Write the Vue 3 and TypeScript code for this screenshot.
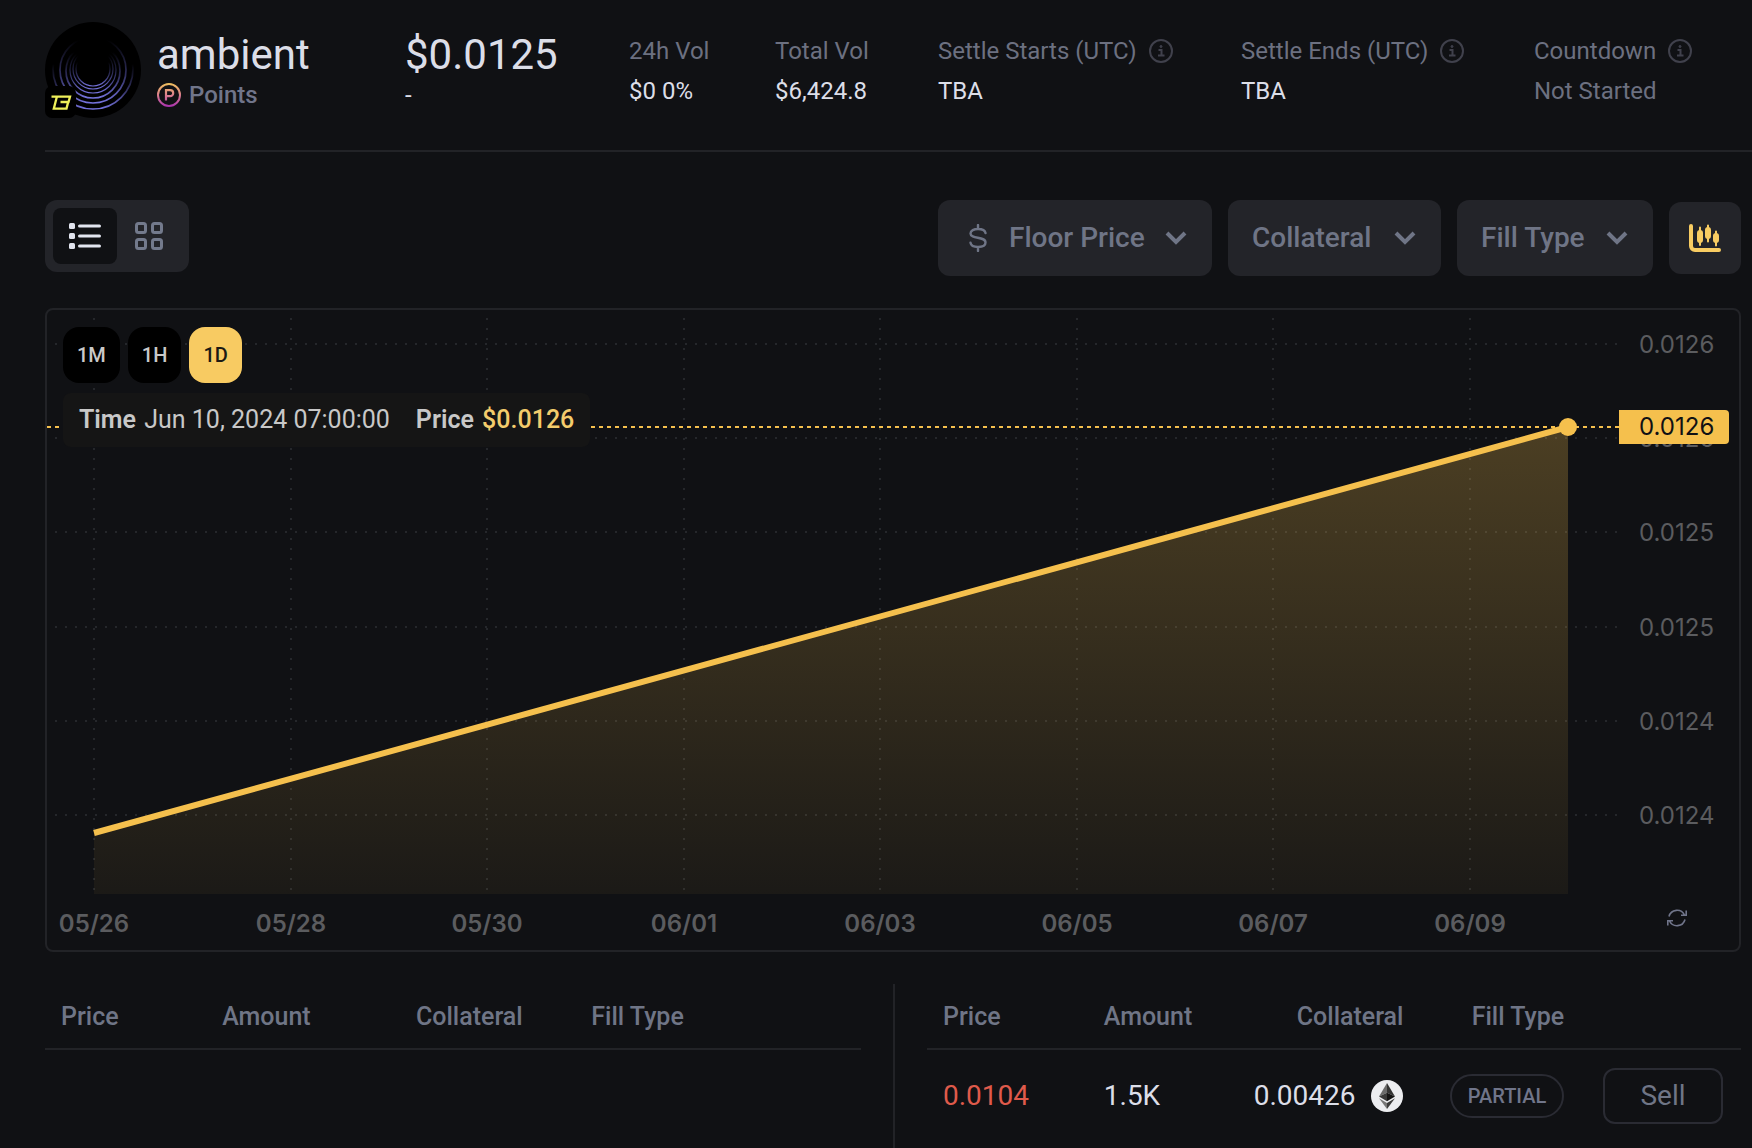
<script setup lang="ts">
import { computed, onBeforeUnmount, onMounted, ref } from 'vue'

interface Stat {
  label: string
  value: string
  info: boolean
  muted?: boolean
}

const stats: Stat[] = [
  { label: '24h Vol', value: '$0 0%', info: false },
  { label: 'Total Vol', value: '$6,424.8', info: false },
  { label: 'Settle Starts (UTC)', value: 'TBA', info: true },
  { label: 'Settle Ends (UTC)', value: 'TBA', info: true },
  { label: 'Countdown', value: 'Not Started', info: true, muted: true },
]

// Concentric arcs of the token logo: radius, centre and the height at which each fades out
const rings = [
  { r: 17, cy: 47, fade: 40 },
  { r: 20, cy: 47, fade: 34 },
  { r: 23, cy: 48, fade: 32 },
  { r: 27, cy: 49, fade: 30 },
  { r: 33, cy: 48, fade: 18 },
  { r: 40, cy: 47, fade: 42 },
]

const view = ref<'list' | 'grid'>('list')
const showChart = ref(true)
const frames = ['1M', '1H', '1D']
const frame = ref('1D')
const headings = ['Price', 'Amount', 'Collateral', 'Fill Type']

// Chart geometry
const HEIGHT = 640
const LEFT = 47
const RIGHT = 171
const AXIS = 120
const TOP = 8
const BASE = 584
const chart = ref<HTMLElement | null>(null)
const width = ref(1692)
const dates = ['05/26', '05/28', '05/30', '06/01', '06/03', '06/05', '06/07', '06/09']
const prices = ['0.0126', '0.0126', '0.0125', '0.0125', '0.0124', '0.0124']

const endX = computed(() => width.value - RIGHT)
const axisX = computed(() => width.value - AXIS)
const columns = computed(() =>
  dates.map((label, i) => ({ label, x: Math.round(LEFT + ((endX.value - LEFT) * i * 2) / 15) })),
)
const rows = prices.map((label, i) => ({ label, y: Math.round(34 + (i * 471) / 5) }))
const startY = 523
const lastY = 117

let observer: ResizeObserver | undefined
onMounted(() => {
  const el = chart.value
  if (!el) return
  width.value = el.clientWidth
  observer = new ResizeObserver(() => {
    width.value = el.clientWidth
  })
  observer.observe(el)
})
onBeforeUnmount(() => observer?.disconnect())
</script>

<template>
  <div class="page">
    <header class="header">
      <div class="token">
        <svg class="logo" viewBox="0 0 96 96" aria-hidden="true">
          <defs>
            <linearGradient
              v-for="ring in rings"
              :id="'ring' + ring.r"
              :key="ring.r"
              gradientUnits="userSpaceOnUse"
              x1="0"
              :y1="ring.fade"
              x2="0"
              :y2="ring.cy + ring.r"
            >
              <stop offset="0" stop-color="#6a68cf" stop-opacity="0" />
              <stop offset="0.6" stop-color="#6a68cf" stop-opacity="0.5" />
              <stop offset="1" stop-color="#7573dd" />
            </linearGradient>
          </defs>
          <circle cx="48" cy="48" r="48" fill="#000" />
          <circle
            v-for="ring in rings"
            :key="ring.r"
            cx="48"
            :cy="ring.cy"
            :r="ring.r"
            fill="none"
            :stroke="`url(#ring${ring.r})`"
            :stroke-width="ring.r > 24 ? 1.7 : 1.2"
          />
          <rect x="0" y="64" width="31" height="32" rx="7" fill="#000" />
          <path
            d="M6.500 74.700H25L23.500 80H15.500M23 80.600L21.500 86.600H8.800L11.800 75"
            fill="none"
            stroke="#eef05a"
            stroke-width="2.300"
          />
        </svg>
        <div>
          <h1 class="title">ambient</h1>
          <div class="kind">
            <svg width="24" height="24" viewBox="0 0 24 24" fill="none" stroke="url(#pointsStroke)" aria-hidden="true">
              <defs>
                <linearGradient id="pointsStroke" gradientUnits="userSpaceOnUse" x1="12" y1="0" x2="12" y2="24">
                  <stop offset="0" stop-color="#efc25c" />
                  <stop offset="0.5" stop-color="#db7f8d" />
                  <stop offset="1" stop-color="#a72fae" />
                </linearGradient>
              </defs>
              <circle cx="12" cy="12" r="11" stroke-width="2" />
              <path d="M9 17.500V7.200h4.200a2.900 2.900 0 0 1 0 6H9" stroke-width="2.200" />
            </svg>
            Points
          </div>
        </div>
      </div>
      <div class="quote">
        <div class="title">$0.0125</div>
        <div class="change">-</div>
      </div>
      <dl v-for="stat in stats" :key="stat.label" class="stat">
        <dt>
          {{ stat.label }}
          <svg v-if="stat.info" width="24" height="24" viewBox="0 0 24 24" fill="none" stroke="currentColor" stroke-width="2" aria-hidden="true">
            <circle cx="12" cy="12" r="11" />
            <path d="M9.500 11H12.500V16.500M9 16.500H15.500" />
            <circle cx="12" cy="7.500" r="1" fill="currentColor" stroke-width="1" />
          </svg>
        </dt>
        <dd :class="{ muted: stat.muted }">{{ stat.value }}</dd>
      </dl>
    </header>

    <main class="main">
      <div class="toolbar">
        <div class="views">
          <button type="button" aria-label="List view" :class="{ on: view === 'list' }" @click="view = 'list'">
            <svg width="32" height="28" viewBox="0 0 32 28" fill="currentColor" aria-hidden="true">
              <rect x="0" y="1" width="6" height="6" rx="1.500" />
              <rect x="0" y="11" width="6" height="6" rx="1.500" />
              <rect x="0" y="21" width="6" height="6" rx="1.500" />
              <rect x="9" y="2.500" width="23" height="3" rx="1.500" />
              <rect x="9" y="12.500" width="23" height="3" rx="1.500" />
              <rect x="9" y="22.500" width="23" height="3" rx="1.500" />
            </svg>
          </button>
          <button type="button" aria-label="Grid view" :class="{ on: view === 'grid' }" @click="view = 'grid'">
            <svg width="28" height="28" viewBox="0 0 28 28" fill="none" stroke="currentColor" stroke-width="3" aria-hidden="true">
              <rect x="1.500" y="1.500" width="9" height="9" rx="2" />
              <rect x="17.500" y="1.500" width="9" height="9" rx="2" />
              <rect x="1.500" y="17.500" width="9" height="9" rx="2" />
              <rect x="17.500" y="17.500" width="9" height="9" rx="2" />
            </svg>
          </button>
        </div>

        <div class="filters">
          <label class="filter sort">
            <svg class="dollar" width="18" height="28" viewBox="0 0 18 28" fill="none" stroke="currentColor" stroke-width="2.400" stroke-linecap="round" aria-hidden="true">
              <path d="M9 1v4M9 23v4M16.500 9C16 6.300 13 5 9 5S1.500 6.500 1.500 9.500C1.500 15.500 16.500 12 16.500 18.500C16.500 21.500 13 23 9 23S2 21.700 1.500 18.800" />
            </svg>
            <select aria-label="Sort by">
              <option>Floor Price</option>
            </select>
            <svg class="chevron" width="22" height="14" viewBox="0 0 22 14" aria-hidden="true"><path d="M2 2l9 9 9-9" /></svg>
          </label>
          <label class="filter collateral">
            <select aria-label="Collateral">
              <option>Collateral</option>
            </select>
            <svg class="chevron" width="22" height="14" viewBox="0 0 22 14" aria-hidden="true"><path d="M2 2l9 9 9-9" /></svg>
          </label>
          <label class="filter fill">
            <select aria-label="Fill Type">
              <option>Fill Type</option>
            </select>
            <svg class="chevron" width="22" height="14" viewBox="0 0 22 14" aria-hidden="true"><path d="M2 2l9 9 9-9" /></svg>
          </label>
          <button class="chart-toggle" type="button" aria-label="Toggle chart" @click="showChart = !showChart">
            <svg width="32" height="28" viewBox="0 0 32 28" fill="none" stroke="currentColor" stroke-linecap="round" aria-hidden="true">
              <path d="M2 2v20a4 4 0 0 0 4 4h24" stroke-width="4" />
              <path d="M11 3.500v17.500M19 1.500v16M27 7.500v14" stroke-width="2" />
              <path d="M11 9v7M19 6v6M27 12v4" stroke-width="6" />
            </svg>
          </button>
        </div>
      </div>

      <section v-if="showChart" ref="chart" class="chart">
        <svg class="plot" :width="width" :height="HEIGHT" role="img" aria-label="Price history">
          <defs>
            <linearGradient id="area" x1="0" y1="0" x2="0" y2="1">
              <stop offset="0" stop-color="#f5c04d" stop-opacity="0.26" />
              <stop offset="1" stop-color="#f5c04d" stop-opacity="0.05" />
            </linearGradient>
          </defs>
          <g class="grid">
            <line v-for="c in columns" :key="c.label" :x1="c.x" :x2="c.x" :y1="TOP" :y2="BASE" />
            <line v-for="r in rows" :key="r.y" x1="8" :x2="axisX" :y1="r.y" :y2="r.y" />
          </g>
          <g class="prices">
            <text v-for="r in rows" :key="r.y" :x="axisX + 20" :y="r.y + 9">{{ r.label }}</text>
          </g>
          <g class="dates">
            <text v-for="c in columns" :key="c.label" :x="c.x" y="622">{{ c.label }}</text>
          </g>
          <polygon :points="`${LEFT},${startY} ${endX},${lastY} ${endX},${BASE} ${LEFT},${BASE}`" fill="url(#area)" />
          <line class="current" x1="0" :x2="axisX" :y1="lastY" :y2="lastY" />
          <line class="series" :x1="LEFT" :y1="startY" :x2="endX" :y2="lastY" />
          <circle class="last" :cx="endX" :cy="lastY" r="9" />
          <path class="tag" :d="`M${axisX} 100h106a4 4 0 0 1 4 4v26a4 4 0 0 1 -4 4h-106z`" />
          <text class="tag-text" :x="axisX + 20" :y="lastY + 8">0.0126</text>
        </svg>
        <div class="overlay">
          <div class="frames">
            <button v-for="f in frames" :key="f" type="button" :class="{ on: frame === f }" @click="frame = f">{{ f }}</button>
          </div>
          <div class="readout">
            <span><b>Time</b> Jun 10, 2024 07:00:00</span>
            <span><b>Price</b> <strong>$0.0126</strong></span>
          </div>
        </div>
        <button class="refresh" type="button" aria-label="Reset chart">
          <svg width="20" height="20" viewBox="0 0 20 20" fill="none" stroke="currentColor" stroke-width="1.600" aria-hidden="true">
            <path d="M2 8.500A8.300 8.300 0 0 1 17.500 7M19.200 2.500V7.300H14M18 11.500A8.300 8.300 0 0 1 2.500 13M.8 17.500V12.700H6" />
          </svg>
        </button>
      </section>

      <div class="books">
        <section class="book">
          <table>
            <thead>
              <tr><th v-for="h in headings" :key="h" scope="col">{{ h }}</th><td></td></tr>
            </thead>
          </table>
        </section>
        <section class="book">
          <table>
            <thead>
              <tr><th v-for="h in headings" :key="h" scope="col">{{ h }}</th><td></td></tr>
            </thead>
            <tbody>
              <tr>
                <td class="ask">0.0104</td>
                <td>1.5K</td>
                <td>
                  <div class="amount">
                    0.00426
                    <svg width="32" height="32" viewBox="0 0 32 32" aria-hidden="true">
                      <circle cx="16" cy="16" r="16" fill="#ecedf0" />
                      <path d="M16 3L8 16.500l8-3.700z" fill="#6b6b6b" />
                      <path d="M16 3l8 13.500-8-3.700z" fill="#343434" />
                      <path d="M8 16.500l8-3.700v8.500z" fill="#393939" />
                      <path d="M24 16.500l-8-3.700v8.500z" fill="#141414" />
                      <path d="M8 18.200l8 4.900V29z" fill="#777" />
                      <path d="M24 18.200l-8 4.900V29z" fill="#3c3c3b" />
                    </svg>
                  </div>
                </td>
                <td><span class="pill">PARTIAL</span></td>
                <td><button class="sell" type="button">Sell</button></td>
              </tr>
            </tbody>
          </table>
        </section>
      </div>
    </main>
  </div>
</template>

<style>
body {
  margin: 0;
  background: #101114;
}
</style>

<style scoped>
.page {
  box-sizing: border-box;
  min-height: 100vh;
  display: flex;
  flex-direction: column;
  padding-left: 45px;
  background: #101114;
  color: #dcdee8;
  font: 400 24px/32px Roboto, "Liberation Sans", sans-serif;
}
button,
select {
  margin: 0;
  padding: 0;
  border: 0;
  font: inherit;
  cursor: pointer;
}
svg {
  display: block;
  flex: none;
}
.header {
  display: grid;
  grid-template-columns: 296px 160px 82px 99px 239px 229px 1fr;
  column-gap: 64px;
  align-items: center;
  padding: 22px 0 32px;
  border-bottom: 2px solid #222327;
}
.token {
  display: flex;
  align-items: center;
  gap: 16px;
}
.logo {
  width: 96px;
  height: 96px;
}
.title {
  margin: 0;
  padding-top: 2px;
  font-size: 42px;
  line-height: 48px;
  font-weight: 400;
}
.kind {
  display: flex;
  align-items: center;
  gap: 8px;
  color: #70758a;
  font-weight: 500;
}
.stat {
  display: grid;
  gap: 8px;
  margin: 0;
  padding-top: 2px;
  white-space: nowrap;
}
.stat dt {
  display: flex;
  align-items: center;
  gap: 12px;
  color: #6c7080;
}
.stat dt svg {
  color: #40414c;
}
.stat dd {
  margin: 0;
}
.stat .muted {
  color: #6c7080;
}
.main {
  flex: 1;
  display: flex;
  flex-direction: column;
  gap: 32px;
  padding: 48px 11px 0 0;
}
.toolbar {
  display: flex;
  justify-content: space-between;
  align-items: flex-start;
}
.views {
  display: flex;
  padding: 8px;
  border-radius: 12px;
  background: #232429;
}
.views button {
  display: grid;
  place-items: center;
  width: 64px;
  height: 56px;
  border-radius: 8px;
  background: none;
  color: #737a8c;
}
.views .on {
  background: #101114;
  color: #e2e5ef;
}
.filters {
  display: flex;
  align-items: center;
  gap: 16px;
}
.filter {
  box-sizing: border-box;
  display: flex;
  align-items: center;
  height: 76px;
  padding: 0 25px 0 24px;
  border-radius: 12px;
  background: #232429;
  color: #6f7586;
}
.sort {
  width: 274px;
}
.collateral {
  width: 213px;
}
.fill {
  width: 196px;
}
.dollar {
  margin: 0 22px 0 7px;
}
.filter select {
  flex: 1;
  min-width: 0;
  appearance: none;
  background: none;
  color: inherit;
  font-size: 28px;
  line-height: 36px;
  font-weight: 500;
}
.chevron {
  fill: none;
  stroke: currentColor;
  stroke-width: 4;
}
.chart-toggle {
  display: grid;
  place-items: center;
  width: 72px;
  height: 72px;
  border-radius: 12px;
  background: #232429;
  color: #f8cc62;
}
.chart {
  position: relative;
  border: 2px solid #222327;
  border-radius: 8px;
}
.grid line {
  stroke: #25272b;
  stroke-width: 2;
  stroke-dasharray: 2 8;
}
.plot text {
  font: 400 24px Inter, sans-serif;
  fill: #5b5c5f;
}
.plot .dates text {
  font-weight: 600;
  text-anchor: middle;
}
.plot .tag-text {
  fill: #101114;
}
.current {
  stroke: #f5c04d;
  stroke-width: 2;
  stroke-dasharray: 4 4;
}
.series {
  stroke: #f5c04d;
  stroke-width: 6;
}
.last,
.tag {
  fill: #f5c04d;
}
.overlay {
  position: absolute;
  top: 17px;
  left: 16px;
}
.frames {
  display: flex;
  gap: 8px;
  margin-bottom: 10px;
}
.frames button {
  height: 56px;
  padding: 0 14px;
  border-radius: 16px;
  background: #000;
  color: #c9c9c9;
  font-size: 20px;
  line-height: 24px;
  font-weight: 500;
}
.frames .on {
  background: #f8cb62;
  color: #1c1a14;
}
.readout {
  display: flex;
  gap: 26px;
  padding: 11px 16px;
  border-radius: 8px;
  background: #151515;
  color: #c8c8c8;
  font-size: 25px;
  white-space: pre;
}
.readout b {
  margin-right: 2px;
  font-weight: 600;
}
.readout strong {
  color: #f3cc6c;
  font-weight: 500;
}
.refresh {
  position: absolute;
  right: 52px;
  bottom: 22px;
  background: none;
  color: #70758a;
}
.books {
  flex: 1;
  display: grid;
  grid-template-columns: 850fr 846fr;
}
.book:first-child {
  padding-right: 32px;
  border-right: 2px solid #222327;
}
.book:last-child {
  padding-left: 32px;
}
.book table {
  width: 100%;
  table-layout: fixed;
  border-collapse: collapse;
}
.book th,
.book td {
  box-sizing: border-box;
  padding: 0 16px;
  text-align: left;
}
.book thead tr {
  height: 65px;
  border-bottom: 2px solid #222327;
}
.book th {
  padding-top: 2px;
  color: #6f7586;
  font-size: 25px;
  font-weight: 500;
}
.book th:nth-child(3) {
  width: 21%;
}
.book th:nth-child(3),
.book th:nth-child(n + 4),
.book td:nth-child(n + 4) {
  text-align: right;
}
.book tbody td {
  height: 93px;
  font-size: 28px;
  line-height: 32px;
}
.book .ask {
  color: #df5a4b;
}
.amount {
  display: flex;
  justify-content: flex-end;
  align-items: center;
  gap: 16px;
}
.book tbody td:nth-child(n + 3) {
  padding-left: 0;
}
.book td:last-child {
  padding-right: 18px;
}
.pill {
  display: inline-block;
  padding: 4px 16px;
  border: 2px solid #2a2b33;
  border-radius: 22px;
  color: #70758a;
  font-size: 20px;
  font-weight: 500;
  vertical-align: middle;
}
.sell {
  width: 120px;
  height: 56px;
  border: 2px solid #2a2b33;
  border-radius: 12px;
  background: none;
  color: #6f7586;
  vertical-align: middle;
}
</style>
